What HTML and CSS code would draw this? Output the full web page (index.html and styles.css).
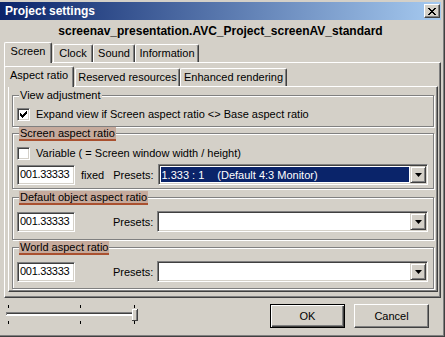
FILE: index.html
```html
<!DOCTYPE html>
<html lang="en">

<head>
  <meta charset="UTF-8">
  <title>Project settings</title>
  <link rel="stylesheet" href="styles.css">
</head>

<body>

  <div class="window">

    <!-- Title bar -->
    <div class="titlebar">
      <span class="title">Project settings</span>
      <div class="close">
        <svg width="8" height="7" viewBox="0 0 8 7">
          <path d="M0 0h2v1h-2zM6 0h2v1h-2zM1 1h2v1h-2zM5 1h2v1h-2zM2 2h4v1h-4zM3 3h2v1h-2zM2 4h4v1h-4zM1 5h2v1h-2zM5 5h2v1h-2zM0 6h2v1h-2zM6 6h2v1h-2z" fill="#000" />
        </svg>
      </div>
    </div>

    <div class="subtitle">screenav_presentation.AVC_Project_screenAV_standard</div>

    <!-- Outer tabs -->
    <div class="tabs">
      <div class="tab active tab-screen">Screen</div>
      <div class="tab tab-clock">Clock</div>
      <div class="tab tab-sound">Sound</div>
      <div class="tab tab-info">Information</div>
    </div>

    <div class="panel outer-panel">

      <!-- Inner tabs -->
      <div class="tabs">
        <div class="tab active tab-aspect">Aspect ratio</div>
        <div class="tab tab-reserved">Reserved resources</div>
        <div class="tab tab-enhanced">Enhanced rendering</div>
      </div>

      <div class="panel inner-panel">

        <div class="group group-view">
          <div class="group-label">View adjustment</div>
          <div class="check-row">
            <span class="checkbox checked">
              <svg width="7" height="7" viewBox="0 0 7 7">
                <path d="M0 2h1v3h-1zM1 3h1v3h-1zM2 4h1v3h-1zM3 3h1v3h-1zM4 2h1v3h-1zM5 1h1v3h-1zM6 0h1v3h-1z" fill="#000" />
              </svg>
            </span>
            <span>Expand view if Screen aspect ratio &lt;&gt; Base aspect ratio</span>
          </div>
        </div>

        <div class="group group-screen">
          <div class="group-label marked">Screen aspect ratio</div>
          <div class="check-row">
            <span class="checkbox"></span>
            <span>Variable ( = Screen window width / height)</span>
          </div>
          <div class="value-row">
            <div class="field">001.33333</div>
            <span class="fixed">fixed</span>
            <span class="presets">Presets:</span>
            <div class="combo">
              <div class="combo-value selected">
                <span>1.333 : 1</span>
                <span class="combo-note">(Default 4:3 Monitor)</span>
              </div>
              <div class="combo-button">
                <svg width="7" height="4" viewBox="0 0 7 4"><path d="M0 0h7l-3.5 4z" fill="#000" /></svg>
              </div>
            </div>
          </div>
        </div>

        <div class="group group-object">
          <div class="group-label marked">Default object aspect ratio</div>
          <div class="value-row">
            <div class="field">001.33333</div>
            <span class="presets wide">Presets:</span>
            <div class="combo">
              <div class="combo-value"></div>
              <div class="combo-button">
                <svg width="7" height="4" viewBox="0 0 7 4"><path d="M0 0h7l-3.5 4z" fill="#000" /></svg>
              </div>
            </div>
          </div>
        </div>

        <div class="group group-world">
          <div class="group-label marked">World aspect ratio</div>
          <div class="value-row">
            <div class="field">001.33333</div>
            <span class="presets wide">Presets:</span>
            <div class="combo">
              <div class="combo-value"></div>
              <div class="combo-button">
                <svg width="7" height="4" viewBox="0 0 7 4"><path d="M0 0h7l-3.5 4z" fill="#000" /></svg>
              </div>
            </div>
          </div>
        </div>

      </div>
    </div>

    <!-- Bottom bar -->
    <div class="footer">
      <svg class="slider" width="134" height="20" viewBox="0 0 134 20">
        <g fill="#000">
          <rect x="2" y="0" width="1" height="3" />
          <rect x="74" y="0" width="1" height="3" />
          <rect x="128" y="0" width="1" height="3" />
          <rect x="2" y="16" width="1" height="3" />
          <rect x="74" y="16" width="1" height="3" />
          <rect x="128" y="16" width="1" height="3" />
        </g>
        <rect x="0" y="7" width="130" height="4" fill="#fff" />
        <rect x="0" y="7" width="129" height="1" fill="#808080" />
        <rect x="0" y="7" width="1" height="3" fill="#808080" />
        <rect x="1" y="8" width="128" height="1" fill="#404040" />
        <rect x="126" y="4" width="6" height="12" fill="#d4d0c8" />
        <rect x="126" y="4" width="5" height="1" fill="#fff" />
        <rect x="126" y="4" width="1" height="11" fill="#fff" />
        <rect x="131" y="4" width="1" height="12" fill="#404040" />
        <rect x="126" y="15" width="6" height="1" fill="#404040" />
        <rect x="130" y="5" width="1" height="10" fill="#808080" />
      </svg>
      <div class="buttons">
        <div class="button default"><span>OK</span></div>
        <div class="button"><span>Cancel</span></div>
      </div>
    </div>

  </div>

</body>

</html>
```

FILE: styles.css
```css
* {
  box-sizing: border-box;
}

body {
  margin: 0;
  background-color: #d4d0c8;
  font-family: 'Liberation Sans', Arial, sans-serif;
  font-size: 11px;
  color: #000;
  white-space: nowrap;
}

.window {
  width: 445px;
  height: 337px;
  padding: 2px 3px 0 0;
  border-right: 1px solid #404040;
  border-bottom: 1px solid #404040;
  box-shadow: inset -1px -1px #808080;
}

/* Title bar */
.titlebar {
  height: 18px;
  display: flex;
  align-items: center;
  justify-content: space-between;
  padding: 0 1px 0 5px;
  background: linear-gradient(to right, #0a246a, #a6caf0);
}

.title {
  color: #fff;
  font-weight: bold;
  font-size: 12px;
}

.close {
  width: 16px;
  height: 14px;
  display: flex;
  align-items: center;
  justify-content: center;
  background-color: #d4d0c8;
  border-top: 1px solid #fff;
  border-left: 1px solid #fff;
  border-right: 1px solid #404040;
  border-bottom: 1px solid #404040;
  box-shadow: inset -1px -1px #808080;
}

.subtitle {
  height: 22px;
  line-height: 22px;
  text-align: center;
  font-weight: bold;
  font-size: 12px;
}

/* Tabs */
.tabs {
  display: flex;
  align-items: flex-end;
  height: 20px;
  position: relative;
  z-index: 1;
}

.tab {
  height: 18px;
  line-height: 17px;
  text-align: center;
  background-color: #d4d0c8;
  border-top: 1px solid #fff;
  border-left: 1px solid #fff;
  border-right: 1px solid #404040;
  border-radius: 2px 2px 0 0;
  box-shadow: inset -1px 0 #808080;
}

.tab.active {
  height: 21px;
  margin-bottom: -1px;
  line-height: 17px;
}

.tab-screen { width: 48px; margin-left: 4px; }
.tab-clock { width: 40px; margin-left: 1px; }
.tab-sound { width: 42px; }
.tab-info { width: 64px; }

.tab-aspect { width: 70px; }
.tab-reserved { width: 105px; margin-left: 1px; }
.tab-enhanced { width: 107px; }

/* Panels */
.panel {
  border-top: 1px solid #fff;
  border-left: 1px solid #fff;
  border-right: 1px solid #404040;
  border-bottom: 1px solid #404040;
  box-shadow: inset -1px -1px #808080;
}

.outer-panel {
  height: 236px;
  margin-left: 4px;
  padding: 3px 2px 4px 3px;
}

.outer-panel .tabs {
  margin-left: -4px;
}

.inner-panel {
  height: 206px;
  padding: 8px 3px 0 3px;
}

/* Group boxes */
.group {
  border: 1px solid #808080;
  box-shadow: inset 1px 1px #fff, 1px 1px #fff;
  padding: 0 5px 0 4px;
}

.group-label {
  width: max-content;
  margin: -7px 0 0 2px;
  padding: 0 1px;
  line-height: 13px;
  background-color: #d4d0c8;
}

.group-label.marked {
  background-color: #c6aa9c;
  border-bottom: 2px solid #a9502f;
  line-height: 12px;
}

.group-view { height: 32px; }
.group-screen { height: 56px; margin-top: 6px; }
.group-object { height: 43px; margin-top: 8px; }
.group-world { height: 42px; margin-top: 7px; }

.check-row {
  display: flex;
  align-items: center;
  gap: 6px;
  margin-top: 6px;
  line-height: 13px;
}

.checkbox {
  width: 13px;
  height: 13px;
  display: flex;
  align-items: center;
  justify-content: center;
  background-color: #fff;
  border-top: 1px solid #808080;
  border-left: 1px solid #808080;
  border-right: 1px solid #fff;
  border-bottom: 1px solid #fff;
  box-shadow: inset 1px 1px #404040, inset -1px -1px #d4d0c8;
}

.value-row {
  display: flex;
  align-items: center;
  margin-top: 4px;
}

.group-object .value-row,
.group-world .value-row {
  margin-top: 6px;
}

.field {
  width: 58px;
  height: 20px;
  line-height: 16px;
  padding-left: 2px;
  letter-spacing: -0.3px;
  background-color: #fff;
  border-top: 1px solid #808080;
  border-left: 1px solid #808080;
  border-right: 1px solid #fff;
  border-bottom: 1px solid #fff;
  box-shadow: inset 1px 1px #404040, inset -1px -1px #d4d0c8;
}

.fixed {
  margin-left: 6px;
}

.presets {
  margin-left: 9px;
}

.presets.wide {
  margin-left: 38px;
}

.combo {
  display: flex;
  width: 271px;
  height: 21px;
  margin-left: 4px;
  padding: 2px;
  background-color: #fff;
  border-top: 1px solid #808080;
  border-left: 1px solid #808080;
  border-right: 1px solid #fff;
  border-bottom: 1px solid #fff;
  box-shadow: inset 1px 1px #404040, inset -1px -1px #d4d0c8;
}

.combo-value {
  flex: 1;
  display: flex;
  align-items: center;
  padding-left: 1px;
  margin-right: 1px;
}

.combo-value.selected {
  background-color: #0a246a;
  color: #fff;
}

.combo-note {
  margin-left: 13px;
}

.combo-button {
  width: 16px;
  display: flex;
  align-items: center;
  justify-content: center;
  margin: -1px -1px -1px 0;
  background-color: #d4d0c8;
  border-top: 1px solid #d4d0c8;
  border-left: 1px solid #d4d0c8;
  border-right: 1px solid #404040;
  border-bottom: 1px solid #404040;
  box-shadow: inset 1px 1px #fff, inset -1px -1px #808080;
}

/* Footer */
.footer {
  display: flex;
  justify-content: space-between;
  align-items: flex-start;
  padding: 6px 12px 0 6px;
}

.slider {
  display: block;
  margin-top: 1px;
}

.buttons {
  display: flex;
  gap: 9px;
}

.button {
  width: 75px;
  height: 24px;
  display: flex;
  align-items: center;
  justify-content: center;
  border-top: 1px solid #fff;
  border-left: 1px solid #fff;
  border-right: 1px solid #404040;
  border-bottom: 1px solid #404040;
  box-shadow: inset -1px -1px #808080;
}

.button.default {
  border: 1px solid #000;
  box-shadow: inset 1px 1px #fff, inset -1px -1px #404040, inset -2px -2px #808080;
}
```
